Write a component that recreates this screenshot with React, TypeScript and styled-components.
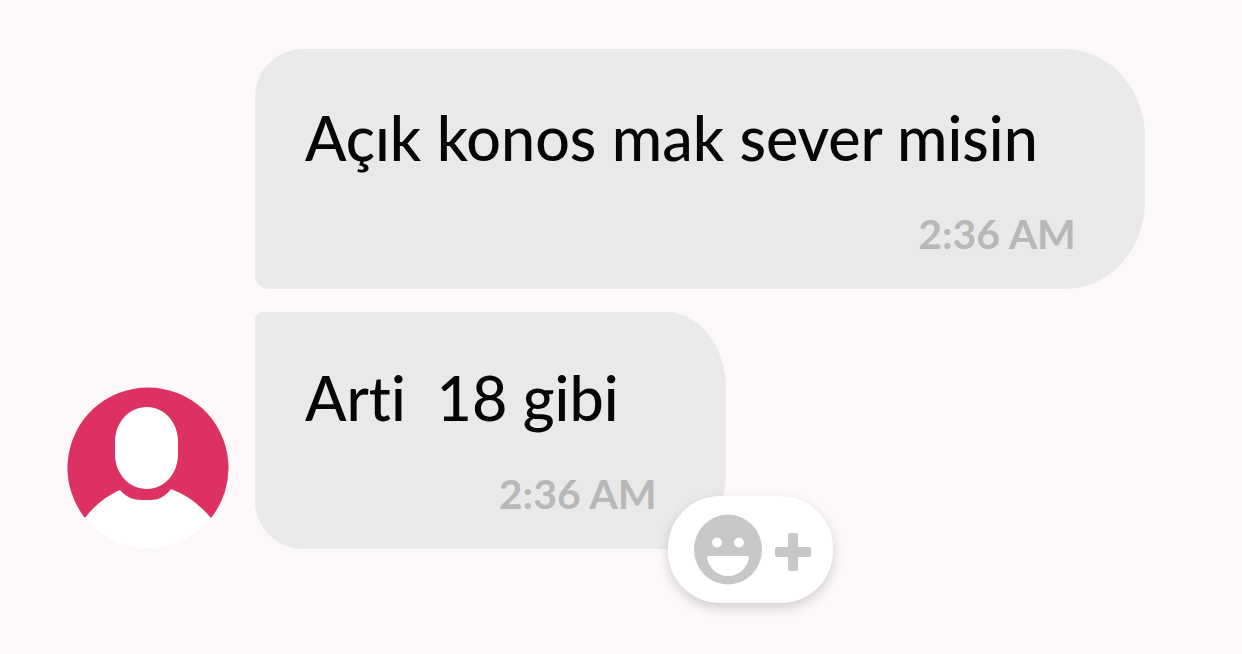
import React from "react";
import styled, { createGlobalStyle } from "styled-components";

const GlobalStyle = createGlobalStyle`
  *, *::before, *::after { box-sizing: border-box; }
  body {
    margin: 0;
    background: #fcf8fa;
    color: #050505;
    font-family: Lato, "Liberation Sans", sans-serif;
    font-variant-ligatures: none;
  }
`;

const Page = styled.main`
  min-height: 100vh;
  padding: 49px 67px;
`;

const MessageGroup = styled.section`
  display: flex;
  align-items: flex-end;
  gap: 26px;
`;

const Avatar = styled.svg`
  flex: none;
  display: block;
  width: 162px;
  height: 162px;
`;

const MessageList = styled.ol`
  flex: 1;
  min-width: 0;
  display: flex;
  flex-direction: column;
  align-items: flex-start;
  gap: 23px;
  margin: 0;
  padding: 0;
  list-style: none;
`;

const Bubble = styled.li<{ $last?: boolean }>`
  position: relative;
  display: flex;
  flex-direction: column;
  max-width: 100%;
  padding: ${(p) => (p.$last ? 50 : 53)}px 69px 31px 50px;
  background: #e9e9e9;
  border-radius: ${(p) =>
    p.$last ? "8px 60px 60px 48px / 8px 76px 76px 48px" : "48px 80px 80px 14px / 48px 88px 88px 14px"};
`;

const MessageText = styled.p`
  margin: 0 38px 0 0;
  font-size: 61px;
  font-weight: 500;
  line-height: 72px;
  white-space: pre-wrap;
`;

const Time = styled.time`
  align-self: flex-end;
  margin-top: 36px;
  color: #b8b8b8;
  font-size: 41px;
  font-weight: 700;
  line-height: 48px;
`;

const ReactionButton = styled.button`
  position: absolute;
  right: -107px;
  bottom: -54px;
  display: flex;
  align-items: center;
  gap: 13px;
  width: 165px;
  height: 107px;
  padding: 0 22px 0 26px;
  border: 0;
  border-radius: 52px;
  background: #fff;
  color: #c7c7c7;
  box-shadow: 0 5px 12px rgba(0, 0, 0, 0.16);
  cursor: pointer;
`;

const Icon = styled.svg<{ $drop?: boolean }>`
  flex: none;
  display: block;
  margin-top: ${(p) => (p.$drop ? 4 : 0)}px;
`;

function ProfilePicture() {
  return (
    <Avatar viewBox="0 -1 162 162" role="img" aria-label="Profile picture">
      <circle cx="81" cy="80" r="80" fill="#fff" />
      <path
        d="M18 130A80.5 80.5 0 1 1 144 130C133 117 120 107 104 101C98 109 91 112 83 112H75C66 112 59 109 53 102C39 108 27 118 18 130Z"
        fill="#de3163"
      />
      <path
        d="M80 19C97 19 111 34 111 54V66C111 86 97 101 80 101C62 101 48 86 48 66V54C48 34 62 19 80 19Z"
        fill="#fff"
      />
    </Avatar>
  );
}

function AddReaction() {
  return (
    <ReactionButton type="button" aria-label="Add reaction">
      <Icon width="68" height="71" viewBox="0 0 68 71" aria-hidden="true">
        <ellipse cx="34" cy="35.5" rx="34" ry="35" fill="currentColor" />
        <circle cx="23" cy="28.5" r="5" fill="#fff" />
        <circle cx="45" cy="28.5" r="5" fill="#fff" />
        <path d="M15 42H53Q55 42 55 44C53 54 45 62 34 62C23 62 15 54 13 44Q13 42 15 42Z" fill="#fff" />
      </Icon>
      <Icon $drop width="36" height="38" viewBox="0 0 36 38" aria-hidden="true">
        <rect x="13" width="10" height="38" rx="2" fill="currentColor" />
        <rect y="14" width="36" height="10" rx="2" fill="currentColor" />
      </Icon>
    </ReactionButton>
  );
}

export default function App() {
  return (
    <>
      <GlobalStyle />
      <Page>
        <MessageGroup>
          <ProfilePicture />
          <MessageList>
            <Bubble>
              <MessageText lang="tr">Açık konos mak sever misin</MessageText>
              <Time dateTime="02:36">2:36 AM</Time>
            </Bubble>
            <Bubble $last>
              <MessageText lang="tr">{"Arti  18 gibi"}</MessageText>
              <Time dateTime="02:36">2:36 AM</Time>
              <AddReaction />
            </Bubble>
          </MessageList>
        </MessageGroup>
      </Page>
    </>
  );
}
